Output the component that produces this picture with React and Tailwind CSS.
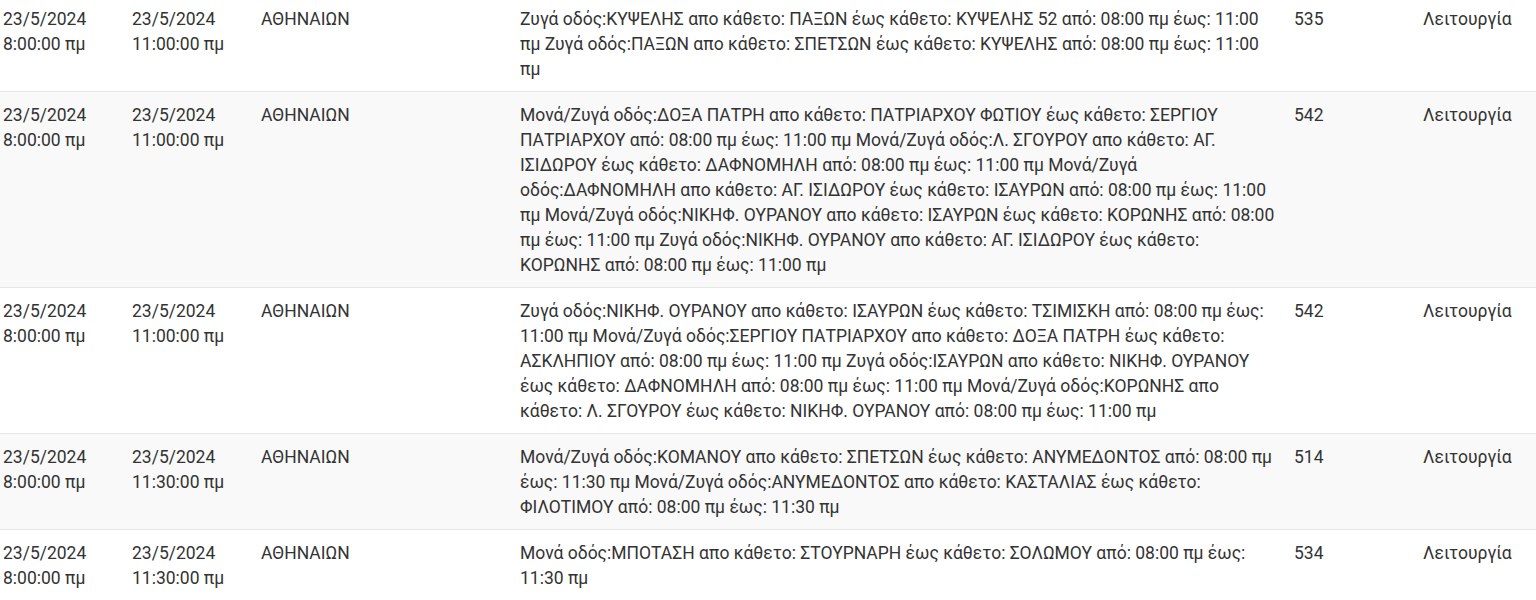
const rows = [
  {
    from: ["23/5/2024", "8:00:00 πμ"],
    to: ["23/5/2024", "11:00:00 πμ"],
    area: "ΑΘΗΝΑΙΩΝ",
    desc: "Ζυγά οδός:ΚΥΨΕΛΗΣ απο κάθετο: ΠΑΞΩΝ έως κάθετο: ΚΥΨΕΛΗΣ 52 από: 08:00 πμ έως: 11:00 πμ Ζυγά οδός:ΠΑΞΩΝ απο κάθετο: ΣΠΕΤΣΩΝ έως κάθετο: ΚΥΨΕΛΗΣ από: 08:00 πμ έως: 11:00 πμ",
    code: "535",
    status: "Λειτουργία",
  },
  {
    from: ["23/5/2024", "8:00:00 πμ"],
    to: ["23/5/2024", "11:00:00 πμ"],
    area: "ΑΘΗΝΑΙΩΝ",
    desc: "Μονά/Ζυγά οδός:ΔΟΞΑ ΠΑΤΡΗ απο κάθετο: ΠΑΤΡΙΑΡΧΟΥ ΦΩΤΙΟΥ έως κάθετο: ΣΕΡΓΙΟΥ ΠΑΤΡΙΑΡΧΟΥ από: 08:00 πμ έως: 11:00 πμ Μονά/Ζυγά οδός:Λ. ΣΓΟΥΡΟΥ απο κάθετο: ΑΓ. ΙΣΙΔΩΡΟΥ έως κάθετο: ΔΑΦΝΟΜΗΛΗ από: 08:00 πμ έως: 11:00 πμ Μονά/Ζυγά οδός:ΔΑΦΝΟΜΗΛΗ απο κάθετο: ΑΓ. ΙΣΙΔΩΡΟΥ έως κάθετο: ΙΣΑΥΡΩΝ από: 08:00 πμ έως: 11:00 πμ Μονά/Ζυγά οδός:ΝΙΚΗΦ. ΟΥΡΑΝΟΥ απο κάθετο: ΙΣΑΥΡΩΝ έως κάθετο: ΚΟΡΩΝΗΣ από: 08:00 πμ έως: 11:00 πμ Ζυγά οδός:ΝΙΚΗΦ. ΟΥΡΑΝΟΥ απο κάθετο: ΑΓ. ΙΣΙΔΩΡΟΥ έως κάθετο: ΚΟΡΩΝΗΣ από: 08:00 πμ έως: 11:00 πμ",
    code: "542",
    status: "Λειτουργία",
  },
  {
    from: ["23/5/2024", "8:00:00 πμ"],
    to: ["23/5/2024", "11:00:00 πμ"],
    area: "ΑΘΗΝΑΙΩΝ",
    desc: "Ζυγά οδός:ΝΙΚΗΦ. ΟΥΡΑΝΟΥ απο κάθετο: ΙΣΑΥΡΩΝ έως κάθετο: ΤΣΙΜΙΣΚΗ από: 08:00 πμ έως: 11:00 πμ Μονά/Ζυγά οδός:ΣΕΡΓΙΟΥ ΠΑΤΡΙΑΡΧΟΥ απο κάθετο: ΔΟΞΑ ΠΑΤΡΗ έως κάθετο: ΑΣΚΛΗΠΙΟΥ από: 08:00 πμ έως: 11:00 πμ Ζυγά οδός:ΙΣΑΥΡΩΝ απο κάθετο: ΝΙΚΗΦ. ΟΥΡΑΝΟΥ έως κάθετο: ΔΑΦΝΟΜΗΛΗ από: 08:00 πμ έως: 11:00 πμ Μονά/Ζυγά οδός:ΚΟΡΩΝΗΣ απο κάθετο: Λ. ΣΓΟΥΡΟΥ έως κάθετο: ΝΙΚΗΦ. ΟΥΡΑΝΟΥ από: 08:00 πμ έως: 11:00 πμ",
    code: "542",
    status: "Λειτουργία",
  },
  {
    from: ["23/5/2024", "8:00:00 πμ"],
    to: ["23/5/2024", "11:30:00 πμ"],
    area: "ΑΘΗΝΑΙΩΝ",
    desc: "Μονά/Ζυγά οδός:ΚΟΜΑΝΟΥ απο κάθετο: ΣΠΕΤΣΩΝ έως κάθετο: ΑΝΥΜΕΔΟΝΤΟΣ από: 08:00 πμ έως: 11:30 πμ Μονά/Ζυγά οδός:ΑΝΥΜΕΔΟΝΤΟΣ απο κάθετο: ΚΑΣΤΑΛΙΑΣ έως κάθετο: ΦΙΛΟΤΙΜΟΥ από: 08:00 πμ έως: 11:30 πμ",
    code: "514",
    status: "Λειτουργία",
  },
  {
    from: ["23/5/2024", "8:00:00 πμ"],
    to: ["23/5/2024", "11:30:00 πμ"],
    area: "ΑΘΗΝΑΙΩΝ",
    desc: "Μονά οδός:ΜΠΟΤΑΣΗ απο κάθετο: ΣΤΟΥΡΝΑΡΗ έως κάθετο: ΣΟΛΩΜΟΥ από: 08:00 πμ έως: 11:30 πμ",
    code: "534",
    status: "Λειτουργία",
  },
];

export default function App() {
  return (
    <div className="h-[600px] overflow-hidden bg-white">
      <div
        className="-mt-[4px] text-[17.5px] leading-[25px] text-[#333333]"
        style={{ fontFamily: "Roboto, 'Noto Sans', sans-serif" }}
      >
        {rows.map((r, i) => (
          <div
            key={i}
            className={`grid grid-cols-[129px_129px_259px_774px_129px_116px] border-b border-[#e6e6e6] ${
              i % 2 === 1 ? "bg-[#f9f9f9]" : "bg-white"
            }`}
          >
            <div className="pl-[3px] pr-[10px] pt-[11px] pb-[9px]">
              {r.from[0]}
              <br />
              {r.from[1]}
            </div>
            <div className="pl-[3px] pr-[10px] pt-[11px] pb-[9px]">
              {r.to[0]}
              <br />
              {r.to[1]}
            </div>
            <div className="pl-[3px] pr-[10px] pt-[11px] pb-[9px]">{r.area}</div>
            <div className="pl-[3px] pr-[13px] pt-[11px] pb-[9px]">{r.desc}</div>
            <div className="pl-[3px] pr-[10px] pt-[11px] pb-[9px]">{r.code}</div>
            <div className="pl-[3px] pr-[10px] pt-[11px] pb-[9px]">{r.status}</div>
          </div>
        ))}
      </div>
    </div>
  );
}
